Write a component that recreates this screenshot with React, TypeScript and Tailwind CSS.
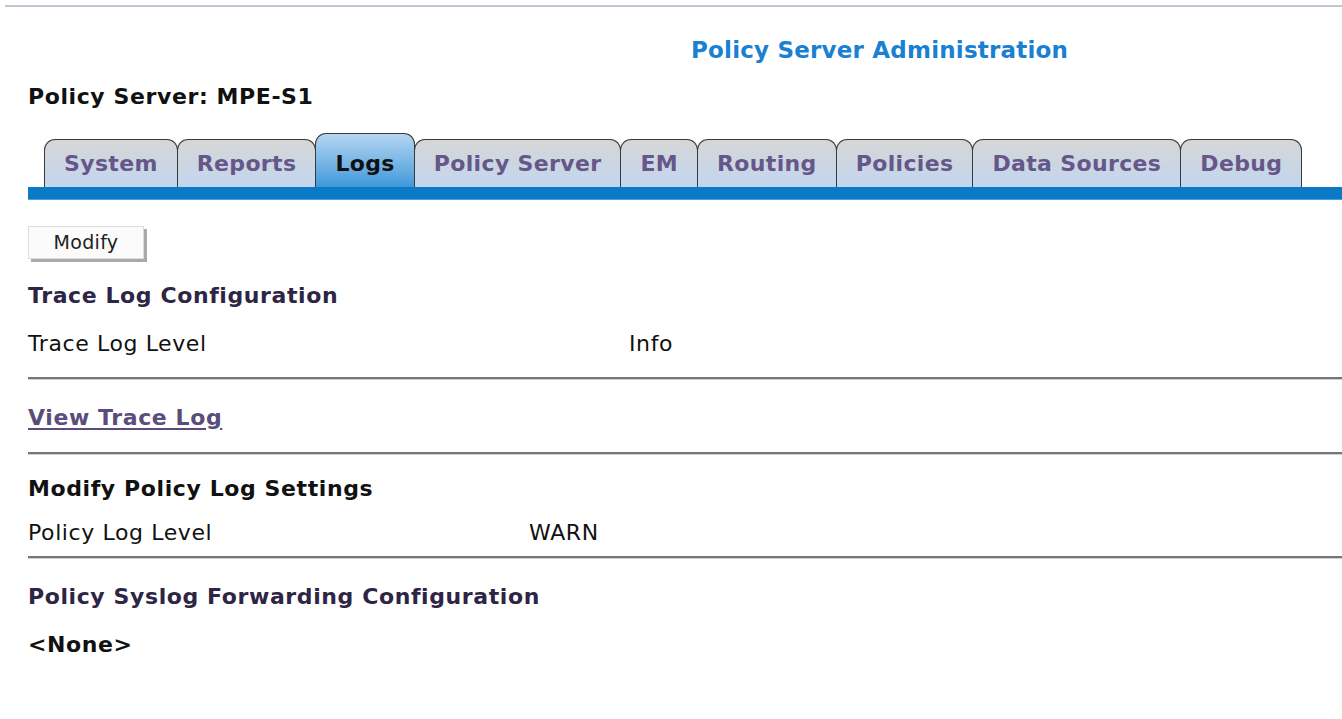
import React from 'react';

const tabs = ['System', 'Reports', 'Logs', 'Policy Server', 'EM', 'Routing', 'Policies', 'Data Sources', 'Debug'];

function Rule({ gap }: { gap: string }) {
  return <div className={gap + ' h-[3px] border-t-2 border-t-[#767676] border-b border-b-[#cfcfcf]'} />;
}

export default function App() {
  const active = 'Logs';
  return (
    <div className="min-h-[719px] bg-white text-[#111] font-['DejaVu_Sans',Verdana,sans-serif]">
      <div className="h-[5px]" />
      <div className="ml-[5px] h-[2px] bg-[#c4c4d4]" />

      <h1 className="mt-[31px] h-[24px] pl-[691px] text-[23px] font-bold leading-[24px] tracking-[0.2px] text-[#1a80d2] whitespace-nowrap">
        Policy Server Administration
      </h1>

      <div className="pl-[28px]">
        <div className="mt-[23px] h-[24px] text-[22px] font-bold leading-[24px] tracking-[0.6px]">Policy Server: MPE-S1</div>

        {/* tab strip */}
        <div className="mt-[24px] flex h-[54px] items-end pl-[16px]">
          {tabs.map((t, i) => {
            const on = t === active;
            return (
              <div
                key={t}
                className={
                  'flex items-center justify-center whitespace-nowrap rounded-t-[11px] border border-b-0 border-[#3a3a3a] px-[19px] text-[22px] font-bold tracking-[0.35px] ' +
                  (i > 0 ? '-ml-px ' : '') +
                  (on
                    ? 'relative z-10 h-[54px] pt-[6px] bg-gradient-to-b from-[#b4d6f2] via-[#7cb8e6] to-[#3d97da] text-[#111]'
                    : 'h-[48px] bg-gradient-to-b from-[#d6d6d6] to-[#c2d6ef] text-[#66578a]')
                }
              >
                {t}
              </div>
            );
          })}
        </div>
        <div className="h-[13px] bg-[#0a79c6] border-b border-b-[#4aa0dc]" />

        <button className="mt-[26px] h-[33px] w-[116px] border border-[#dcdcdc] bg-[#fbfbfb] text-[19px] tracking-[0.3px] text-[#222] shadow-[3px_3px_0_#a9a9a9]">
          Modify
        </button>

        <div className="mt-[25px] h-[24px] text-[22px] font-bold leading-[24px] tracking-[0.6px] text-[#2e2545]">Trace Log Configuration</div>
        <div className="mt-[24px] flex h-[24px] text-[22px] leading-[24px] tracking-[0.6px]">
          <span className="w-[601px]">Trace Log Level</span>
          <span>Info</span>
        </div>
        <Rule gap="mt-[21px]" />

        <div className="mt-[26px] h-[24px] text-[22px] font-bold leading-[24px] tracking-[0.6px]">
          <a href="#" className="text-[#5a4d7b] underline underline-offset-[3px]">View Trace Log</a>
        </div>
        <Rule gap="mt-[22px]" />

        <div className="mt-[22px] h-[24px] text-[22px] font-bold leading-[24px] tracking-[0.6px]">Modify Policy Log Settings</div>
        <div className="mt-[20px] flex h-[24px] text-[22px] leading-[24px] tracking-[0.6px]">
          <span className="w-[501px]">Policy Log Level</span>
          <span>WARN</span>
        </div>
        <Rule gap="mt-[11px]" />

        <div className="mt-[26px] h-[24px] text-[22px] font-bold leading-[24px] tracking-[0.6px] text-[#2e2545]">
          Policy Syslog Forwarding Configuration
        </div>
        <div className="mt-[24px] h-[24px] text-[22px] font-bold leading-[24px] tracking-[0.6px]">&lt;None&gt;</div>
      </div>
    </div>
  );
}
